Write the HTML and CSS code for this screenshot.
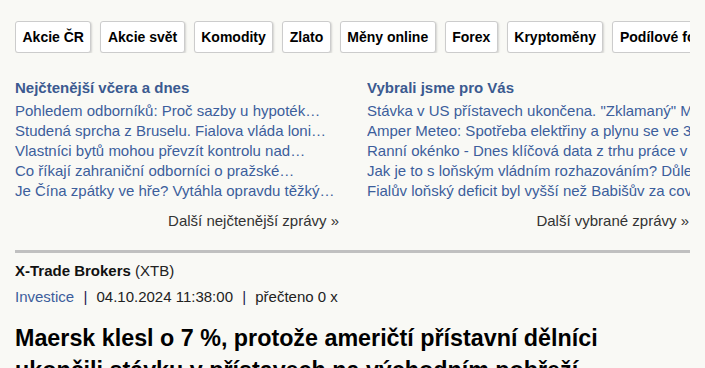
FILE: index.html
```html
<!DOCTYPE html>
<html>

<head>
    <link rel="stylesheet" href="styles.css">
</head>

<body>
    <div id="page">
        <div id="tabs">
            <a class="tab" href="#">Akcie ČR</a>
            <a class="tab" href="#">Akcie svět</a>
            <a class="tab" href="#">Komodity</a>
            <a class="tab" href="#">Zlato</a>
            <a class="tab" href="#">Měny online</a>
            <a class="tab" href="#">Forex</a>
            <a class="tab" href="#">Kryptoměny</a>
            <a class="tab" href="#">Podílové fondy</a>
        </div>

        <div id="news">
            <div class="news-col">
                <h3>Nejčtenější včera a dnes</h3>
                <a href="#">Pohledem odborníků: Proč sazby u hypoték…</a>
                <a href="#">Studená sprcha z Bruselu. Fialova vláda loni…</a>
                <a href="#">Vlastníci bytů mohou převzít kontrolu nad…</a>
                <a href="#">Co říkají zahraniční odborníci o pražské…</a>
                <a href="#">Je Čína zpátky ve hře? Vytáhla opravdu těžký…</a>
                <a class="more" href="#">Další nejčtenější zprávy »</a>
            </div>
            <div class="news-col">
                <h3>Vybrali jsme pro Vás</h3>
                <a href="#">Stávka v US přístavech ukončena. "Zklamaný" Maersk…</a>
                <a href="#">Amper Meteo: Spotřeba elektřiny a plynu se ve 39.…</a>
                <a href="#">Ranní okénko - Dnes klíčová data z trhu práce v USA</a>
                <a href="#">Jak je to s loňským vládním rozhazováním? Důležitá…</a>
                <a href="#">Fialův loňský deficit byl vyšší než Babišův za covidu</a>
                <a class="more" href="#">Další vybrané zprávy »</a>
            </div>
        </div>

        <div id="article">
            <div class="author"><b>X-Trade Brokers</b> (XTB)</div>
            <div class="meta">
                <a href="#">Investice</a>
                <span class="sep">|</span>
                <span>04.10.2024 11:38:00</span>
                <span class="sep">|</span>
                <span>přečteno 0 x</span>
            </div>
            <h1>Maersk klesl o 7 %, protože američtí přístavní dělníci ukončili stávku v přístavech na východním pobřeží</h1>
        </div>
    </div>
</body>

</html>
```

FILE: styles.css
```css
body {
    margin: 0;
    padding: 0;
    background: #f9f9f5;
    color: #222;
    font-family: "Liberation Sans", Arial, sans-serif;
    font-size: 15px;
}

a {
    text-decoration: none;
}

#page {
    width: 675px;
    margin-left: 15px;
    padding-top: 21px;
    overflow: hidden;
}

#tabs {
    display: flex;
    gap: 9px;
    overflow: hidden;
}

.tab {
    flex: none;
    height: 30px;
    line-height: 30px;
    padding: 0 6.5px;
    background: #fff;
    border: 1px solid #ccc;
    border-radius: 3px;
    box-shadow: 1px 1px 2px rgba(0, 0, 0, 0.15);
    color: #000;
    font-size: 14px;
    font-weight: bold;
    white-space: nowrap;
}

#news {
    display: grid;
    grid-template-columns: 325px 323px;
    gap: 27px;
    margin-top: 25px;
}

.news-col {
    display: flex;
    flex-direction: column;
    line-height: 20px;
    overflow: hidden;
}

.news-col h3 {
    margin: 0 0 3px;
    font-size: 15px;
    color: #3b5a90;
}

.news-col a {
    color: #3c5e9c;
    white-space: nowrap;
    overflow: hidden;
}

.news-col a.more {
    margin-top: 10px;
    align-self: flex-end;
    color: #333;
    padding-right: 1px;
}

#article {
    margin-top: 19px;
    border-top: 3px solid #c0c0c0;
    padding-top: 8px;
    line-height: 20px;
}

.author b {
    color: #111;
}

.meta {
    margin-top: 6px;
    color: #222;
}

.meta a {
    color: #3c5e9c;
}

.sep {
    color: #1a1a50;
    margin: 0 5px;
}

h1 {
    margin: 15px 0 0;
    font-size: 23.3px;
    line-height: 32px;
    color: #000;
}
```
